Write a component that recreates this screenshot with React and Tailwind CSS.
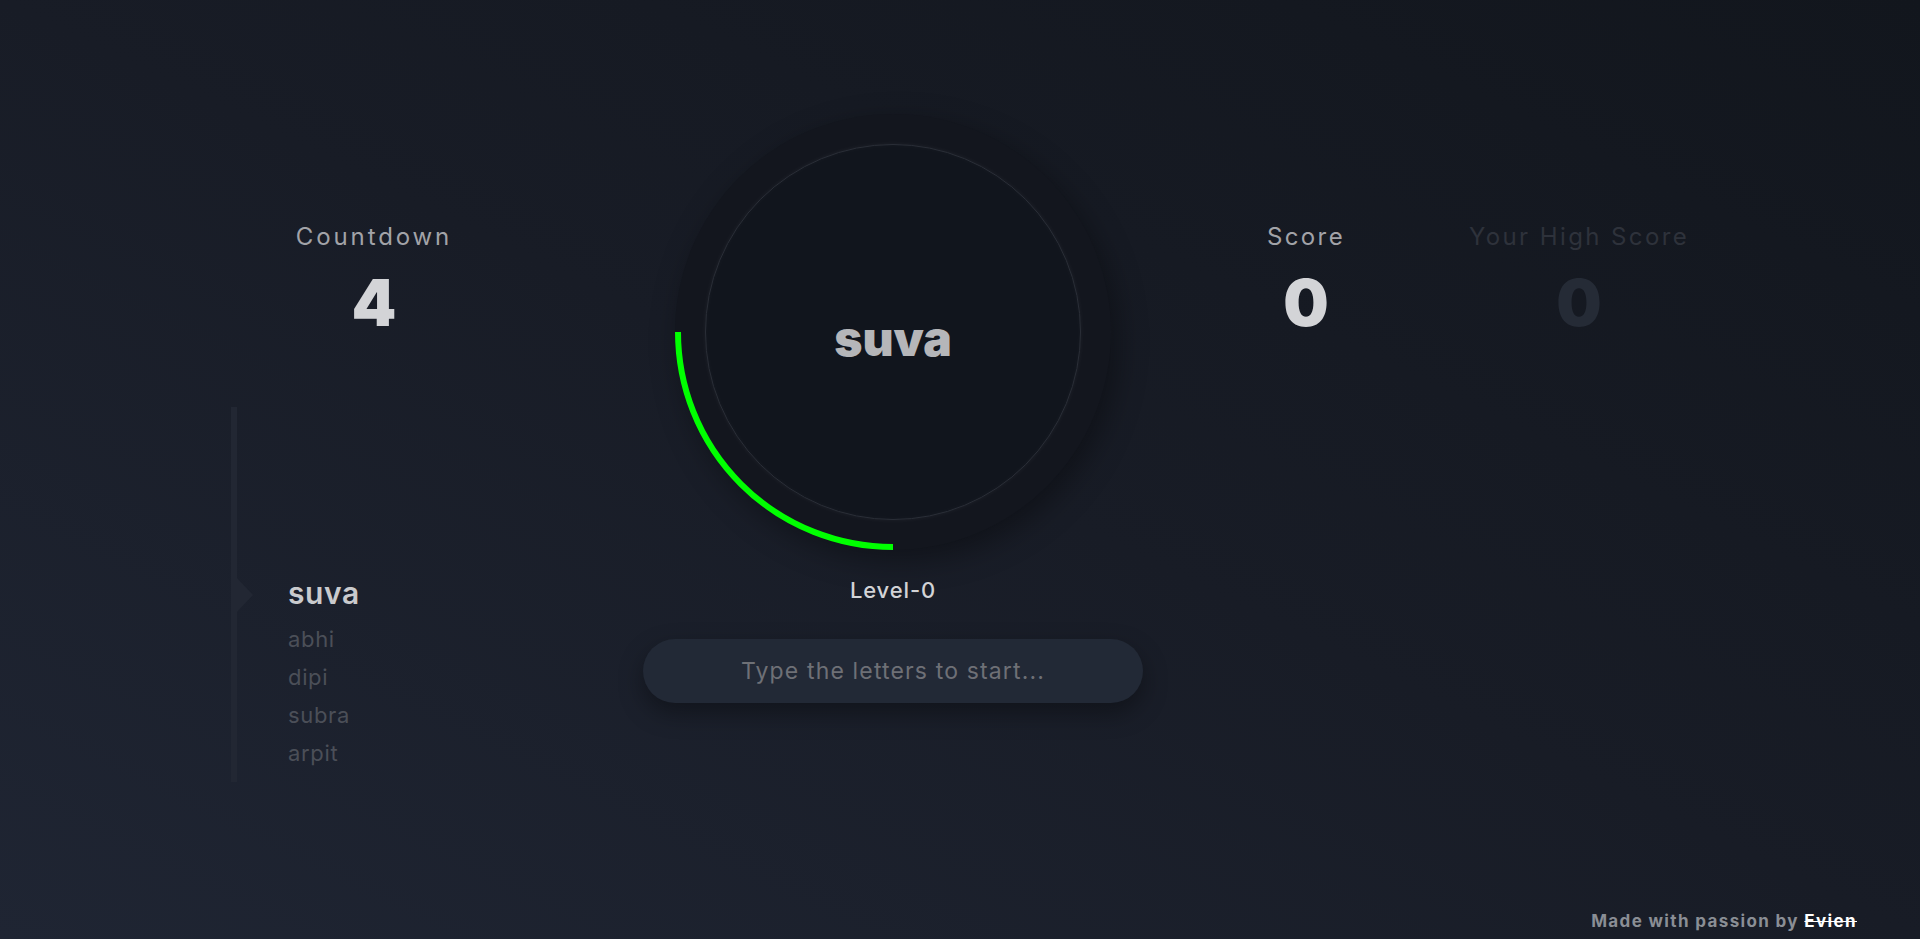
import { useState } from "react";

const font = { fontFamily: "Inter, 'Noto Sans', sans-serif" };

function Stat({ label, value, dim }) {
  return (
    <div className="w-[220px] flex flex-col items-center pt-[107px]">
      <span className={`text-[24px] leading-[32px] tracking-[0.1em] whitespace-nowrap ${dim ? "text-[#2e323b]" : "text-[#a2a3a8]"}`}>
        {label}
      </span>
      <span className={`mt-[18px] text-[64px] leading-[64px] font-black ${dim ? "text-[#252b36]" : "text-[#d3d4d7]"}`}>
        {value}
      </span>
    </div>
  );
}

export default function App() {
  const [typed, setTyped] = useState("");
  const words = ["abhi", "dipi", "subra", "arpit"];
  const r = 215;
  const c = 218;

  return (
    <div
      style={font}
      className="min-h-screen w-full flex flex-col bg-[linear-gradient(to_top_right,#1f2533,#181c26_50%,#12161d)]"
    >
      <main className="flex items-start pt-[114px] pl-[231px]">
        {/* left column */}
        <div className="w-[286px] flex flex-col">
          <div className="flex flex-col items-center pt-[107px]">
            <span className="text-[24px] leading-[32px] tracking-[0.12em] text-[#a2a3a8]">Countdown</span>
            <span className="mt-[18px] text-[64px] leading-[64px] font-black text-[#d3d4d7]">4</span>
          </div>

          <div className="mt-[72px] h-[375px] border-l-[6px] border-[#222733] flex flex-col justify-end pl-[51px] pb-[10px]">
            <ul>
              <li className="relative text-[30px] leading-[54px] font-semibold tracking-[0.02em] text-[#c9cacd]">
                suva
                <span className="absolute left-[-51px] top-1/2 -translate-y-[15px] w-0 h-0 border-y-[17px] border-y-transparent border-l-[16px] border-l-[#222733]" />
              </li>
              {words.map((w) => (
                <li key={w} className="text-[22px] leading-[38px] tracking-[0.03em] text-[#4b4f58]">
                  {w}
                </li>
              ))}
            </ul>
          </div>
        </div>

        {/* center column */}
        <div className="ml-[126px] w-[500px] flex flex-col">
          <div className="relative ml-[32px] w-[436px] h-[436px] rounded-full bg-[#13161e] shadow-[6px_10px_30px_rgba(0,0,0,0.35)] p-[30px]">
            <div className="w-full h-full rounded-full bg-[#11151d] border border-[#2a2e37] shadow-[0_0_5px_rgba(255,255,255,0.05),inset_0_0_6px_rgba(255,255,255,0.03)] flex items-center justify-center">
              <span className="mt-[14px] text-[48px] leading-none font-black text-[#b5b6b9]">suva</span>
            </div>
            <svg className="absolute inset-0 overflow-visible" width="436" height="436" viewBox="0 0 436 436">
              <path
                d={`M ${c - r} ${c} A ${r} ${r} 0 0 0 ${c} ${c + r}`}
                fill="none"
                stroke="#00ff00"
                strokeWidth="6"
              />
            </svg>
          </div>

          <span className="mt-[26px] text-center text-[22px] leading-[28px] font-medium tracking-[0.04em] text-[#d3d4d7]">Level-0</span>

          <input
            value={typed}
            onChange={(e) => setTyped(e.target.value)}
            placeholder="Type the letters to start..."
            className="mt-[35px] h-[64px] w-full rounded-full bg-[#222936] text-center text-[23px] tracking-[0.05em] text-[#d3d4d7] placeholder:text-[#6e7076] outline-none shadow-[0_10px_25px_rgba(0,0,0,0.35)]"
          />
        </div>

        {/* right columns */}
        <div className="ml-[53px]">
          <Stat label="Score" value="0" />
        </div>
        <div className="ml-[53px]">
          <Stat label="Your High Score" value="0" dim />
        </div>
      </main>

      <footer className="mt-auto flex justify-end pr-[63px] pb-[6px]">
        <p className="text-[17px] leading-[24px] font-bold tracking-[0.08em] text-[#8a8e95]">
          Made with passion by <span className="text-white line-through">Evien</span>
        </p>
      </footer>
    </div>
  );
}
